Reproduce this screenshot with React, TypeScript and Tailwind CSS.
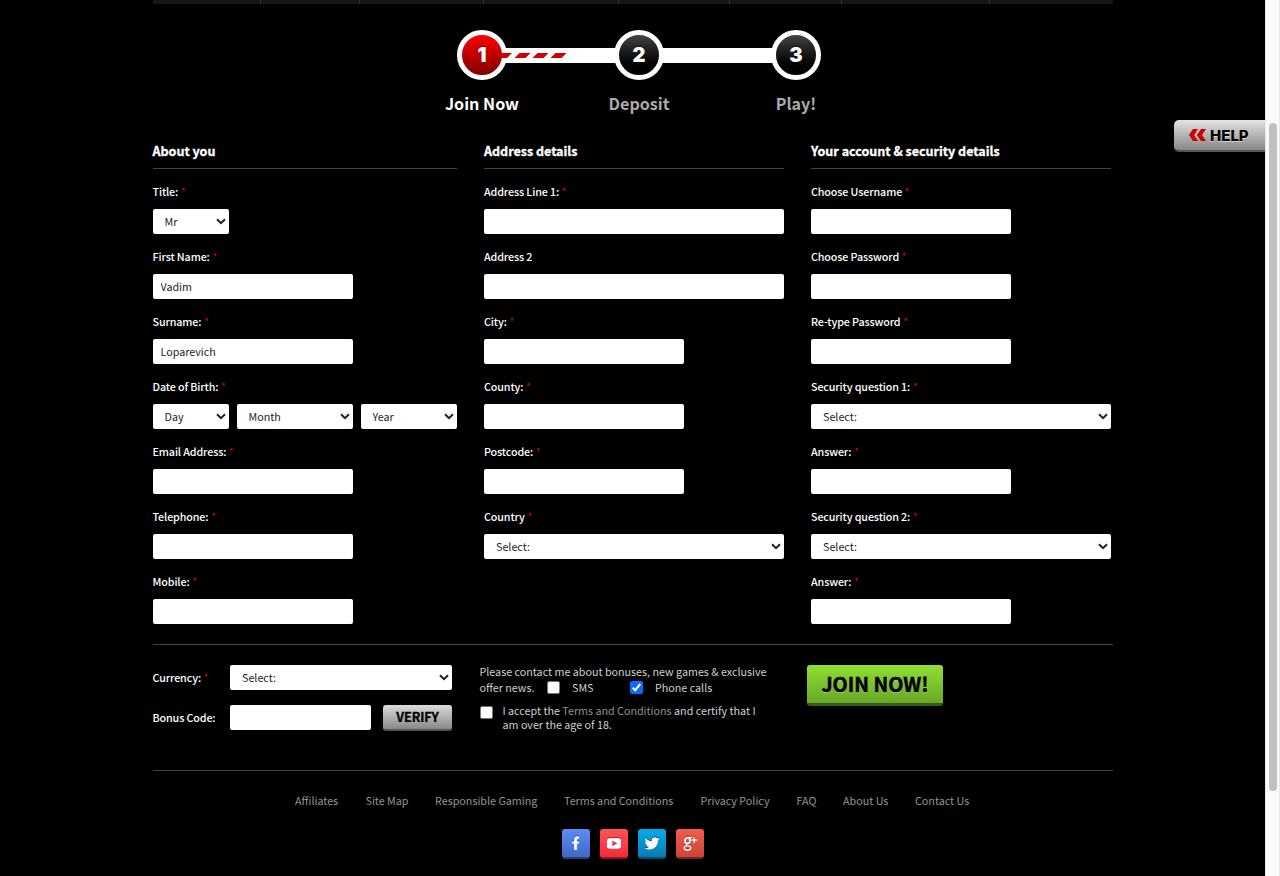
import React from "react";

const menuWidths = ["w-[108px]", "w-[99px]", "w-[124px]", "w-[135px]", "w-[111px]", "w-[112px]", "w-[148px]", "w-[123px]"];

function Chevron() {
  return (
    <svg className="pointer-events-none absolute right-[3px] top-[9px]" width="10" height="7" viewBox="0 0 10 7" fill="none">
      <path d="M1 1.2 5 5.2 9 1.2" stroke="#222" strokeWidth="2" />
    </svg>
  );
}

function Label({ text, required = true }: { text: string; required?: boolean }) {
  return (
    <label className="block h-4 whitespace-nowrap text-[10.74px] leading-[15px] font-medium tracking-[-0.12px] text-white">
      {text}
      {required && <span className="ml-[2.5px] font-normal text-[#c00]">*</span>}
    </label>
  );
}

function TextInput({ value = "", width }: { value?: string; width: string }) {
  return (
    <input
      type="text"
      defaultValue={value}
      className={`block h-[25px] rounded-[2px] bg-white px-2 pb-px text-[10.74px] text-[#222] outline-none ${width}`}
    />
  );
}

function SelectBox({ value, width }: { value: string; width: string }) {
  return (
    <div className={`relative h-[25px] ${width}`}>
      <select className="block h-[25px] w-full appearance-none rounded-[2px] bg-white pt-px pl-3 text-[10.74px] text-[#222] outline-none">
        <option>{value}</option>
      </select>
      <Chevron />
    </div>
  );
}

function Field({ label, required = true, children }: { label: string; required?: boolean; children: React.ReactNode }) {
  return (
    <div className="h-[65px]">
      <Label text={label} required={required} />
      <div className="mt-[9px] flex gap-2">{children}</div>
    </div>
  );
}

function Section({ title, width, children }: { title: string; width: string; children: React.ReactNode }) {
  return (
    <section className={width}>
      <h2 className="h-[26px] border-b border-[#444] text-[12.53px] leading-[15px] font-bold whitespace-nowrap text-white [-webkit-text-stroke:0.3px_#fff]">{title}</h2>
      <div className="pt-[15px]">{children}</div>
    </section>
  );
}

function Step({ n, active = false }: { n: string; active?: boolean }) {
  return (
    <div
      className={`z-10 flex h-[50px] w-[50px] shrink-0 items-center justify-center rounded-full border-[5px] border-white bg-linear-to-b font-['Inter',sans-serif] text-[20px] leading-none font-black text-white [text-shadow:0_-1px_0_#0008] ${
        active ? "from-[#f00] to-[#800000]" : "from-[#444] to-black"
      }`}
    >
      {n}
    </div>
  );
}

function Check({ checked = false }: { checked?: boolean }) {
  return (
    <span className={`flex h-[13px] w-[13px] shrink-0 items-center justify-center rounded-[2px] ${checked ? "bg-[#0a6cff]" : "border border-[#767676] bg-white"}`}>
      {checked && (
        <svg width="13" height="13" viewBox="0 0 13 13" fill="none">
          <path d="M2.7 6.8 5.2 9.2 10.3 3" stroke="white" strokeWidth="2" />
        </svg>
      )}
    </span>
  );
}

function Social({ colors, children }: { colors: string; children: React.ReactNode }) {
  return (
    <a className={`flex h-[30px] w-7 items-center justify-center rounded-[3px] border-b-2 bg-linear-to-b pt-px ${colors}`}>
      <svg width="28" height="28" viewBox="0 0 28 28" fill="white" className="shrink-0 [filter:drop-shadow(0_-1px_0_#0006)]">
        {children}
      </svg>
    </a>
  );
}

const links: [string, string][] = [
  ["Affiliates", "w-[70.5px]"],
  ["Site Map", "w-[69.5px]"],
  ["Responsible Gaming", "w-[129px]"],
  ["Terms and Conditions", "w-[136.5px]"],
  ["Privacy Policy", "w-[96px]"],
  ["FAQ", "w-[46.5px]"],
  ["About Us", "w-[72px]"],
  ["Contact Us", "w-[56px]"],
];

export default function App() {
  return (
    <div className="relative flex h-[876px] w-[1280px] overflow-hidden bg-black font-['Noto_Sans_CJK_SC',sans-serif]">
      <main className="flex w-[1265px] flex-col pl-[152.5px]">
        <nav className="flex h-1 w-[960px] bg-[#161616]">
          {menuWidths.map((w, i) => (
            <div key={i} className={`h-1 shrink-0 ${w} ${i < 7 ? "border-r border-[#333]" : ""}`} />
          ))}
        </nav>

        <div className="mt-[26px] ml-[304.5px] flex h-[50px] w-[364px] items-center">
          <Step n="1" active />
          <div className="-mx-1 h-[15px] flex-1 bg-white">
            <svg className="relative z-20 -ml-[2px] block" width="80" height="15" viewBox="0 0 80 15" fill="#c00">
              <path d="M0 5h11l-5 5H0zM18.500 5h11l-5 5h-11zM36.500 5h11l-5 5h-11zM54.500 5h11l-5 5h-11z" />
            </svg>
          </div>
          <Step n="2" />
          <div className="-mx-1 h-[15px] flex-1 bg-white" />
          <Step n="3" />
        </div>
        <div className="mt-3 ml-[251px] flex h-6 w-[471px] text-center text-[16.11px] leading-[23px] font-bold text-[#aaa]">
          <span className="w-[157px] text-white">Join Now</span>
          <span className="w-[157px]">Deposit</span>
          <span className="w-[157px]">Play!</span>
        </div>

        <div className="mt-[27px] flex h-[501px]">
          <Section title="About you" width="w-[304.5px]">
            <Field label="Title:"><SelectBox value="Mr" width="w-[76px]" /></Field>
            <Field label="First Name:"><TextInput value="Vadim" width="w-[200px]" /></Field>
            <Field label="Surname:"><TextInput value="Loparevich" width="w-[200px]" /></Field>
            <Field label="Date of Birth:">
              <SelectBox value="Day" width="w-[76px]" />
              <SelectBox value="Month" width="w-[116px]" />
              <SelectBox value="Year" width="w-[96px]" />
            </Field>
            <Field label="Email Address:"><TextInput width="w-[200px]" /></Field>
            <Field label="Telephone:"><TextInput width="w-[200px]" /></Field>
            <Field label="Mobile:"><TextInput width="w-[200px]" /></Field>
          </Section>
          <div className="w-[27px]" />
          <Section title="Address details" width="w-[300px]">
            <Field label="Address Line 1:"><TextInput width="w-[300px]" /></Field>
            <Field label="Address 2" required={false}><TextInput width="w-[300px]" /></Field>
            <Field label="City:"><TextInput width="w-[200px]" /></Field>
            <Field label="County:"><TextInput width="w-[200px]" /></Field>
            <Field label="Postcode:"><TextInput width="w-[200px]" /></Field>
            <Field label="Country"><SelectBox value="Select:" width="w-[300px]" /></Field>
          </Section>
          <div className="w-[27px]" />
          <Section title="Your account & security details" width="w-[300px]">
            <Field label="Choose Username"><TextInput width="w-[200px]" /></Field>
            <Field label="Choose Password"><TextInput width="w-[200px]" /></Field>
            <Field label="Re-type Password"><TextInput width="w-[200px]" /></Field>
            <Field label="Security question 1:"><SelectBox value="Select:" width="w-[300px]" /></Field>
            <Field label="Answer:"><TextInput width="w-[200px]" /></Field>
            <Field label="Security question 2:"><SelectBox value="Select:" width="w-[300px]" /></Field>
            <Field label="Answer:"><TextInput width="w-[200px]" /></Field>
          </Section>
        </div>

        <div className="flex h-[126px] w-[960px] border-t border-[#444] pt-5">
          <div className="w-[327px]">
            <div className="flex h-10">
              <div className="w-[77.5px] pt-[5px]"><Label text="Currency:" /></div>
              <SelectBox value="Select:" width="w-[222px]" />
            </div>
            <div className="flex">
              <div className="w-[77.5px] pt-[5px]"><Label text="Bonus Code:" required={false} /></div>
              <TextInput width="w-[141px]" />
              <button className="ml-3 h-[26px] w-[69px] rounded-[3px] border-b-2 border-[#555] bg-linear-to-b from-[#ddd] to-[#888] text-[12.53px] leading-none font-bold text-black [-webkit-text-stroke:0.4px_#000] [text-shadow:0_1px_0_#fff8]">
                VERIFY
              </button>
            </div>
          </div>
          <div className="w-[327.5px] text-[10.74px] leading-[14px] whitespace-nowrap text-[#d0d0d0]">
            <div className="h-4 leading-[14px]">Please contact me about bonuses, new games &amp; exclusive</div>
            <div className="flex h-[13px] items-center">
              <span className="w-[67.5px]">offer news.</span>
              <Check />
              <span className="ml-3 w-[57.5px]">SMS</span>
              <Check checked />
              <span className="ml-[12.5px]">Phone calls</span>
            </div>
            <div className="mt-[10px] flex">
              <div className="pt-[2px]"><Check /></div>
              <div className="ml-[10px]">
                I accept the <a className="text-[#909090]">Terms and Conditions</a> and certify that I
                <br />
                am over the age of 18.
              </div>
            </div>
          </div>
          <button className="h-[41px] w-[136px] rounded-[3px] border-b-[3px] border-[#375a14] bg-linear-to-b from-[#8fe033] to-[#69a826] text-[19.7px] leading-none font-bold whitespace-nowrap text-black [-webkit-text-stroke:0.5px_#000] [text-shadow:0_1px_0_#fff8]">
            JOIN NOW!
          </button>
        </div>

        <footer className="w-[960px] border-t border-[#444]">
          <div className="mt-[22px] ml-[142.5px] flex h-4 text-[10.74px] leading-[15px] whitespace-nowrap text-[#959595]">
            {links.map(([t, w]) => (
              <a key={t} className={`shrink-0 ${w}`}>{t}</a>
            ))}
          </div>
          <div className="mt-5 ml-[409.5px] flex gap-[10px]">
            <Social colors="from-[#5b8cf8] to-[#4468c4] border-[#26407c]">
              <path d="M12.200 20v-6.300h-1.900v-2.500h1.900V9.600c0-2.300 1.300-3.300 3.200-3.300.9 0 1.600.1 1.600.1v2.400h-1c-.9 0-1.100.4-1.100 1.100v1.300h2.100l-.3 2.500h-1.800V20z" />
            </Social>
            <Social colors="from-[#ff5058] to-[#f8283a] border-[#8c1820]">
              <path fillRule="evenodd" d="M9 8.200q5-.5 10 0 2 .2 2 2.200v6q0 2-2 2.200-5 .5-10 0-2-.2-2-2.200v-6q0-2 2-2.200zM12.300 10.500v5.500l5-2.700z" />
            </Social>
            <Social colors="from-[#08aaf0] to-[#087cb0] border-[#065070]">
              <path transform="translate(6.500 6) scale(.625)" d="M23.950 4.570a10 10 0 0 1-2.820.770 4.960 4.960 0 0 0 2.160-2.720c-.950.550-2 .950-3.120 1.180a4.920 4.920 0 0 0-8.380 4.480C7.690 8.090 4.070 6.130 1.640 3.160a4.820 4.820 0 0 0-.670 2.480c0 1.710.870 3.210 2.190 4.100a4.900 4.900 0 0 1-2.230-.620v.060a4.920 4.920 0 0 0 3.950 4.830 5 5 0 0 1-2.210.080 4.940 4.940 0 0 0 4.600 3.420A9.870 9.870 0 0 1 0 19.540a14 14 0 0 0 7.550 2.210c9.050 0 14-7.500 14-13.980 0-.210 0-.420-.020-.630a9.940 9.940 0 0 0 2.460-2.550z" />
            </Social>
            <Social colors="from-[#f45c4c] to-[#cc4638] border-[#74261e]">
              <g fill="none" stroke="white">
                <ellipse cx="11.500" cy="10.500" rx="2.500" ry="2.800" strokeWidth="1.700" />
                <path d="M12 7.500h4M11 13.300q-1.500 1.200.5 2.200" strokeWidth="1.300" />
                <ellipse cx="11.500" cy="17.800" rx="3.200" ry="2.200" strokeWidth="1.400" />
                <path d="M15.500 10h5.500M18.200 7.200v5.600" strokeWidth="1.400" />
              </g>
            </Social>
          </div>
        </footer>
      </main>

      <aside className="w-[15px] border-x border-[#e8e8e8] bg-[#fafafa] pt-[123px]">
        <div className="ml-[3px] h-[668px] w-2 rounded-full bg-[#c1c1c1]" />
      </aside>

      <button className="absolute top-[120px] left-[1174px] flex h-8 w-[91px] items-center rounded-l-[5px] border-b-2 border-[#555] bg-linear-to-b from-[#e4e4e4] to-[#888] pl-[15px] text-black">
        <svg width="17" height="12" viewBox="0 0 17 12" fill="#c00">
          <path d="M4 0h5L5 6l4 6H4L0 6zM12 0h5l-4 6 4 6h-5L8 6z" />
        </svg>
        <span className="ml-1 pt-px font-['Inter',sans-serif] text-[15px] leading-none font-extrabold [text-shadow:0_1px_0_#fff8]">HELP</span>
      </button>
    </div>
  );
}
